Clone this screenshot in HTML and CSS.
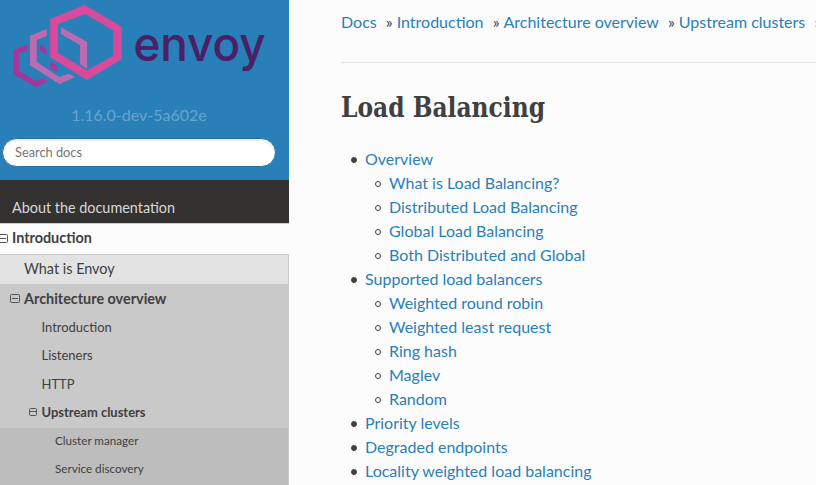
FILE: index.html
```html
<!DOCTYPE html>
<html lang="en">
<head>
<meta charset="utf-8">
<title>Load Balancing</title>
<link rel="stylesheet" href="styles.css">
</head>
<body>
<div class="page">
  <aside class="sidebar">
    <header class="brand">
      <svg class="logo" viewBox="0 0 289 100" role="img" aria-label="envoy">
        <g transform="scale(.33333)">
          <path fill="#a43799" d="M81 134 40 150V223L108 262 145 244 128 235 108 243 58 213V160L81 152ZM120 134 140 147V164L120 153ZM151 184 172 197V216L151 205Z"/>
          <path fill="#bd6bb0" d="M140 87 90 107V196L178 252 226 231 204 221 178 231 110 186V120L140 108ZM183 82 261 125V206L240 192V136L183 102Z"/>
          <path fill="#d94a9c" stroke="#d94a9c" stroke-width="2" stroke-linejoin="round" fill-rule="evenodd" d="M254 16 364 81V177L261 239 151 171V58ZM256 41 173 72V159L261 212 341 168V91Z"/>
        </g>
        <text class="wordmark" x="133.500" y="61" textLength="132" lengthAdjust="spacingAndGlyphs">envoy</text>
      </svg>
      <div class="version">1.16.0-dev-5a602e</div>
      <input class="search" type="text" placeholder="Search docs">
    </header>
    <nav class="menu">
      <a class="top">About the documentation</a>
      <a class="l1"><i class="toggle"></i>Introduction</a>
      <div class="branch">
        <a class="l2">What is Envoy</a>
        <a class="l2 current"><i class="toggle"></i>Architecture overview</a>
        <a class="l3">Introduction</a>
        <a class="l3">Listeners</a>
        <a class="l3">HTTP</a>
        <a class="l3 current"><i class="toggle"></i>Upstream clusters</a>
        <a class="l4">Cluster manager</a>
        <a class="l4">Service discovery</a>
      </div>
    </nav>
  </aside>
  <main class="content">
    <div class="crumbs"><a>Docs</a><span>»</span><a>Introduction</a><span>»</span><a>Architecture overview</a><span>»</span><a>Upstream clusters</a><span>»</span></div>
    <h1><span>Load Balancing</span></h1>
    <ul class="toc">
      <li><a>Overview</a>
        <ul>
          <li><a>What is Load Balancing?</a></li>
          <li><a>Distributed Load Balancing</a></li>
          <li><a>Global Load Balancing</a></li>
          <li><a>Both Distributed and Global</a></li>
        </ul>
      </li>
      <li><a>Supported load balancers</a>
        <ul>
          <li><a>Weighted round robin</a></li>
          <li><a>Weighted least request</a></li>
          <li><a>Ring hash</a></li>
          <li><a>Maglev</a></li>
          <li><a>Random</a></li>
        </ul>
      </li>
      <li><a>Priority levels</a></li>
      <li><a>Degraded endpoints</a></li>
      <li><a>Locality weighted load balancing</a></li>
    </ul>
  </main>
</div>
</body>
</html>
```
FILE: styles.css
```css
*, *::before { box-sizing: border-box; }
body {
  margin: 0;
  background: #fcfcfc;
  color: #404040;
  font: 16px/24px Lato, sans-serif;
  overflow: hidden;
}
.page { display: flex; height: 485px; overflow: hidden; }
.sidebar { flex: 0 0 289px; background: #343131; }
.brand {
  height: 180px;
  background: #2980b9;
  display: flex;
  flex-direction: column;
}
.logo { display: block; width: 289px; height: 100px; }
.wordmark { font: 500 48px Inter, sans-serif; fill: #4b2067; stroke: #4b2067; stroke-width: .2px; }
.version {
  margin: 3px 11px 11px 0;
  text-align: center;
  color: rgba(255, 255, 255, .3);
}
.search {
  width: 274px;
  height: 29px;
  margin-left: 2px;
  padding: 0 12px 2px;
  border: 1px solid #2472a4;
  border-radius: 50px;
  background: #fff;
  box-shadow: inset 0 1px 3px #ddd;
  font: 12.8px Lato, sans-serif;
}
.search::placeholder { color: #757575; }
.menu a { display: flex; align-items: center; position: relative; color: #404040; }
.menu .top {
  height: 43px;
  padding: 13px 0 0 12px;
  color: #d9d9d9;
  font-size: 14.4px;
}
.menu .l1 {
  height: 31px;
  padding: 0 0 2px 12px;
  border-top: 1px solid #c9c9c9;
  background: #fcfcfc;
  font-size: 14.4px;
  font-weight: 700;
}
.branch { border: solid #c9c9c9; border-width: 1px 1px 0 0; }
.l2 { height: 29px; padding: 0 0 1px 24px; background: #e3e3e3; font-size: 14.4px; }
.l2.current { padding-bottom: 0; background: #c9c9c9; font-weight: 700; }
.l3 { height: 28.5px; padding: 0 0 1px 41.5px; background: #c9c9c9; font-size: 12.96px; }
.l3.current { height: 29.5px; padding-bottom: 2px; font-weight: 700; }
.l4 { height: 28px; padding: 0 0 4px 55px; background: #bdbdbd; font-size: 11.66px; }
.l4:last-child { height: 30px; padding-bottom: 6px; }
.toggle {
  position: absolute;
  left: 10px;
  top: 10px;
  width: 10px;
  height: 9px;
  border: 1px solid #555;
  border-radius: 1.5px;
  background: linear-gradient(#555, #555) center / 6px 1px no-repeat;
}
.l1 .toggle { left: -2px; }
.l3 .toggle { left: 29px; top: 9px; width: 8px; height: 8px; }
.content { flex: 1; min-width: 0; padding: 10px 0 0 52px; }
.content a { color: #2980b9; }
.crumbs {
  height: 53px;
  border-bottom: 1px solid #e1e4e5;
  white-space: nowrap;
  overflow: hidden;
}
.crumbs span { margin: 0 4px 0 9.1px; }
h1 {
  margin: 25px 0 19px;
  height: 40px;
  font: 700 28px/40px "Roboto Slab", "DejaVu Serif Condensed", "DejaVu Serif", serif;
}
h1 span { display: inline-block; transform: scaleX(.928); transform-origin: left; }
.toc, .toc ul { margin: 0; padding: 0; list-style: none; }
.toc li { position: relative; margin-left: 24px; }
.toc li::before {
  content: "";
  position: absolute;
  left: -14px;
  top: 10px;
  width: 6px;
  height: 6px;
  border: 1px solid #404040;
  border-radius: 50%;
  background: #404040;
}
.toc ul li::before { background: none; }
```
